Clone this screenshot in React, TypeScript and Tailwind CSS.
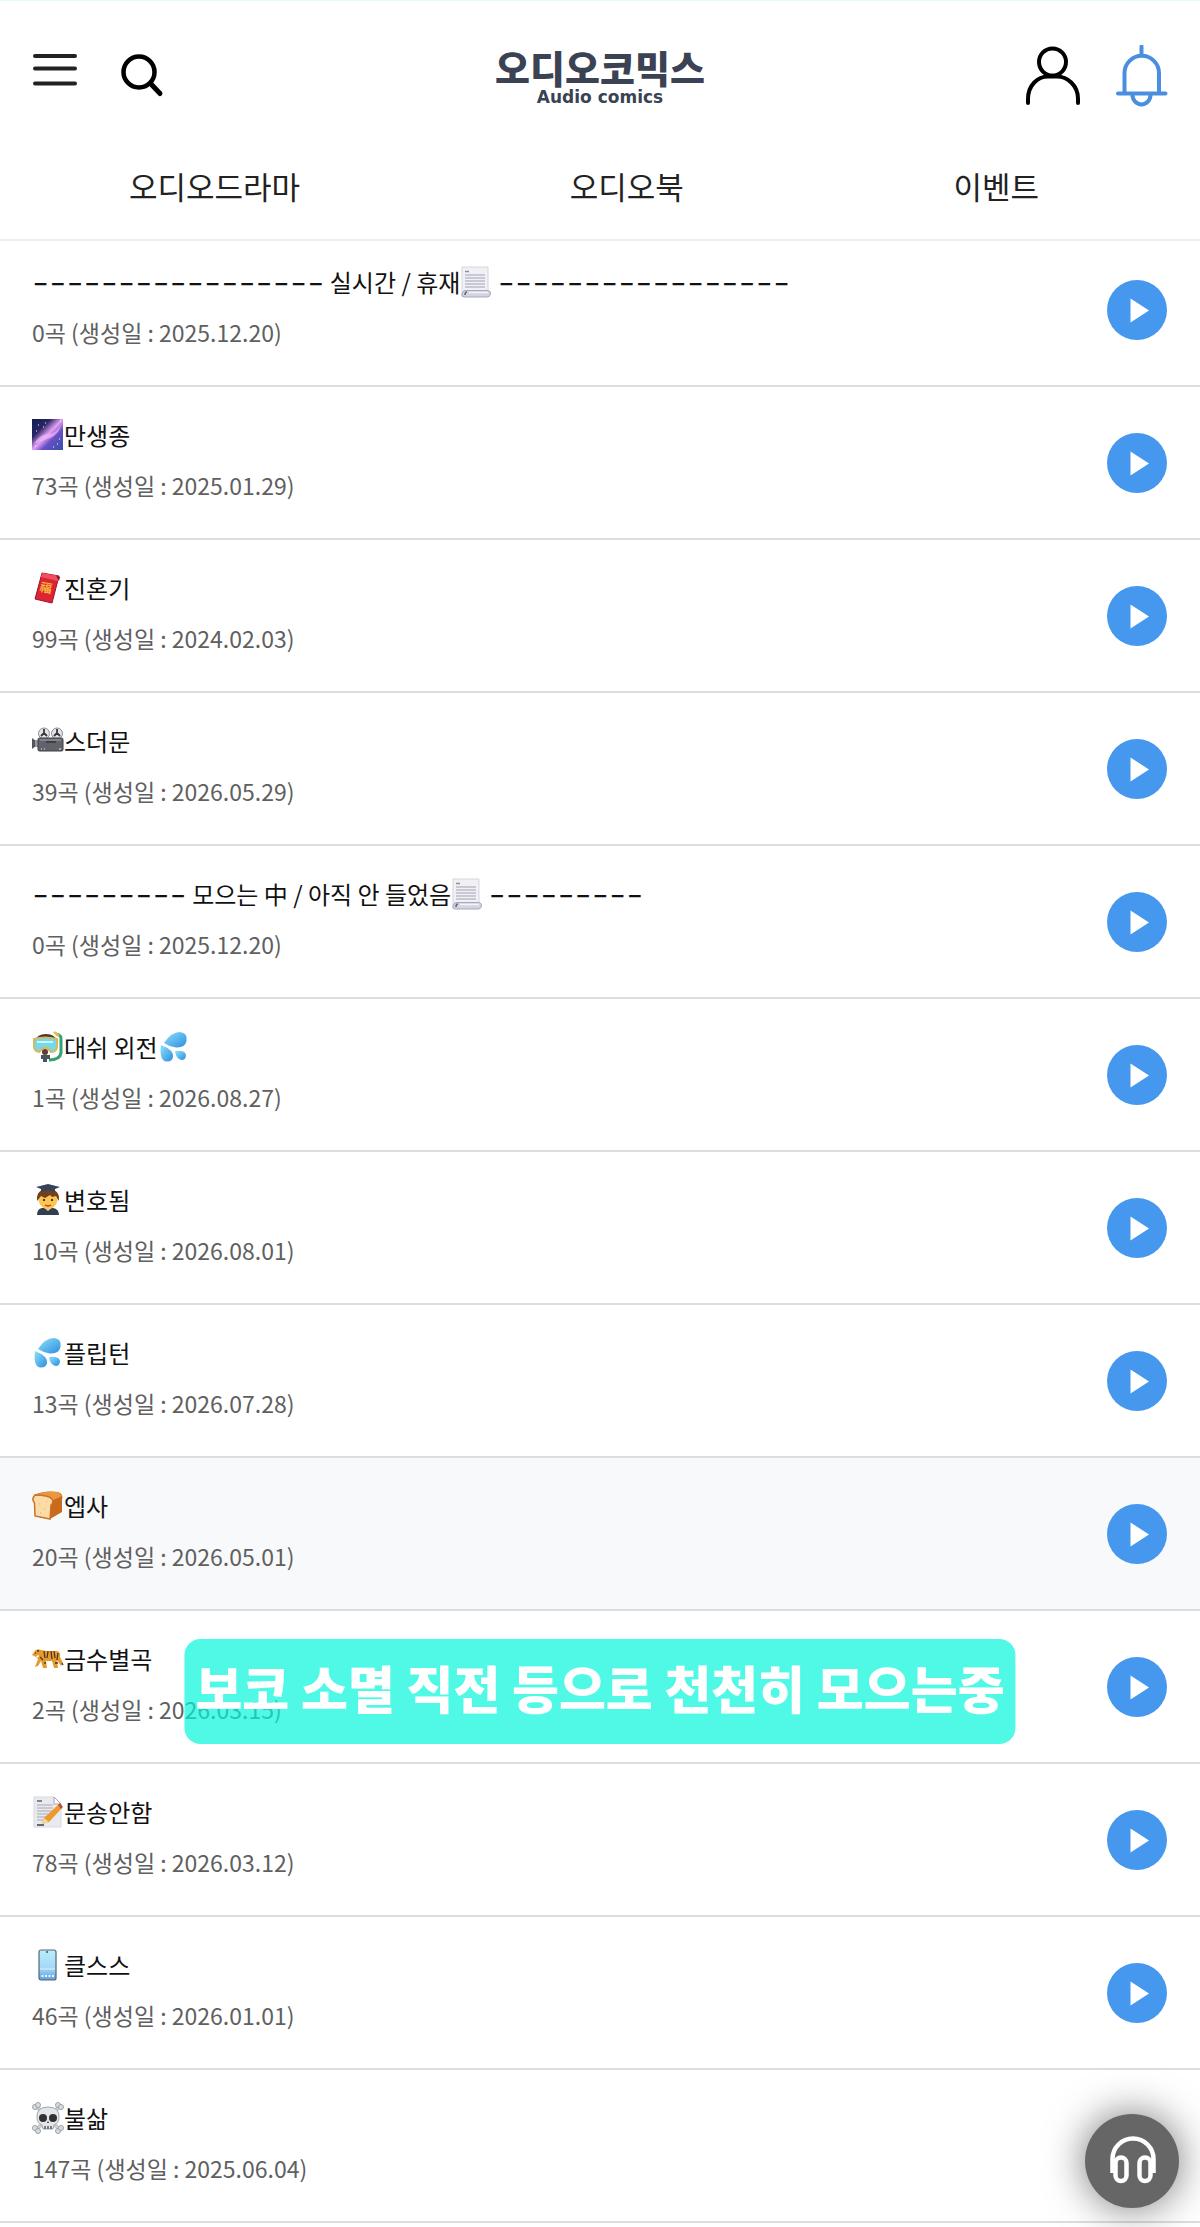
import React from 'react';

type IconName =
  | 'page'
  | 'galaxy'
  | 'envelope'
  | 'camera'
  | 'mask'
  | 'drops'
  | 'student'
  | 'bread'
  | 'tiger'
  | 'memo'
  | 'phone'
  | 'skull';

interface Playlist {
  before?: string;
  icon: IconName;
  after: string;
  trailing?: IconName;
  count: number;
  date: string;
  active?: boolean;
}

const playlists: Playlist[] = [
  { before: '----------------- 실시간 / 휴재', icon: 'page', after: ' -----------------', count: 0, date: '2025.12.20' },
  { icon: 'galaxy', after: '만생종', count: 73, date: '2025.01.29' },
  { icon: 'envelope', after: '진혼기', count: 99, date: '2024.02.03' },
  { icon: 'camera', after: '스더문', count: 39, date: '2026.05.29' },
  { before: '--------- 모으는 中 / 아직 안 들었음', icon: 'page', after: ' ---------', count: 0, date: '2025.12.20' },
  { icon: 'mask', after: '대쉬 외전', trailing: 'drops', count: 1, date: '2026.08.27' },
  { icon: 'student', after: '변호됨', count: 10, date: '2026.08.01' },
  { icon: 'drops', after: '플립턴', count: 13, date: '2026.07.28' },
  { icon: 'bread', after: '엡사', count: 20, date: '2026.05.01', active: true },
  { icon: 'tiger', after: '금수별곡', count: 2, date: '2026.03.15' },
  { icon: 'memo', after: '문송안함', count: 78, date: '2026.03.12' },
  { icon: 'phone', after: '클스스', count: 46, date: '2026.01.01' },
  { icon: 'skull', after: '불삶', count: 147, date: '2025.06.04' },
];

const drawings: Record<IconName, React.ReactNode> = {
  page: (
    <>
      <path d="M2 1H28V26H5V30H2Z" fill="#f1f1f5" stroke="#d5d5de" />
      <path d="M5 5.500H9" stroke="#8f8f9c" strokeWidth="1.500" />
      <path d="M5 9H25M5 12H25M5 15H25M5 18H25M5 21H25" stroke="#bcbccb" strokeWidth="1.400" />
      <path d="M5 24.500H28Q31 25 30.500 28Q30 31 27 31H4Q1.500 31 2 28Q2.500 25 5 24.500Z" fill="#d3d3e2" stroke="#a9a9bc" />
      <path d="M7 26Q5 26 5 29" fill="none" stroke="#66667c" strokeWidth="1.600" />
      <path d="M9 26.500H28" stroke="#f3f3fa" strokeWidth="1.500" />
    </>
  ),
  galaxy: (
    <>
      <defs>
        <linearGradient id="galaxy" x1="0" y1="0" x2="1" y2="1">
          <stop offset="0" stopColor="#0d1c4d" />
          <stop offset="0.3" stopColor="#2b2566" />
          <stop offset="0.5" stopColor="#e3a0f5" />
          <stop offset="0.66" stopColor="#6a4fc4" />
          <stop offset="1" stopColor="#3152a8" />
        </linearGradient>
      </defs>
      <rect x="0" y="0" width="31" height="31" fill="url(#galaxy)" />
      <path d="M2 25Q8 15 16 15T29 6Q26 16 18 19T2 25Z" fill="#f0b8f8" opacity="0.7" />
      <path d="M6 6h1M13 4h1M4 12h1M27 20h1M21 28h1M25 25h1M28 2h1M3 27h1M11 8h1" stroke="#fff" strokeWidth="1.200" />
    </>
  ),
  envelope: (
    <>
      <path d="M10 1L27 4L20 31L3 27Z" fill="#dd2435" stroke="#a3142c" strokeLinejoin="round" />
      <path d="M10 1L27 4L26 9L9 5Z" fill="#f0505a" />
      <path d="M24 3.500L28 5L27 9Z" fill="#6f1524" />
      <text x="8" y="20" fontSize="12" fontWeight="700" fill="#f6b93b" transform="rotate(12 14 16)">福</text>
    </>
  ),
  camera: (
    <>
      <circle cx="12" cy="8.500" r="5.500" fill="#e4e4e7" stroke="#8b8b93" />
      <circle cx="25" cy="8.500" r="5.500" fill="#e4e4e7" stroke="#8b8b93" />
      <path d="M12 4v4M9 11l3-3l3 3M25 4v4M22 11l3-3l3 3" stroke="#35353c" strokeWidth="1.800" fill="none" />
      <path d="M0 13L4 16V21L0 24Z" fill="#55555d" />
      <rect x="3" y="15" width="4" height="7" fill="#9999a1" />
      <rect x="6" y="13" width="25" height="13" rx="1.500" fill="#62626b" stroke="#3e3e47" />
      <path d="M8 15H29" stroke="#a2a2ac" />
      <path d="M14 17H24" stroke="#36363e" strokeWidth="1.500" />
      <path d="M9 24h1M12 24h1M27 24h2" stroke="#eee" />
    </>
  ),
  mask: (
    <>
      <path d="M3 10Q5 3 14 3Q23 3 25 10Z" fill="#4b382b" />
      <path d="M24 3Q30 4 29 9V22Q28 29 17 29" fill="none" stroke="#35a071" strokeWidth="3" />
      <path d="M22 1L27 5" stroke="#e9bb3f" strokeWidth="2.500" />
      <path d="M2 8Q13 5 25 8V15Q25 21 19 21L15 17H11L7 21Q2 20 2 15Z" fill="#78d7e8" stroke="#d8b85c" strokeWidth="2" strokeLinejoin="round" />
      <path d="M5 11H21" stroke="#c9f7fb" strokeWidth="2" />
      <ellipse cx="13" cy="21" rx="3" ry="3" fill="#5a4030" />
      <path d="M9 24H18V28H15V31H11V28H9Z" fill="#4b535b" />
    </>
  ),
  drops: (
    <>
      <defs>
        <linearGradient id="drop" x1="0" y1="0" x2="1" y2="1">
          <stop offset="0" stopColor="#8fe1fa" />
          <stop offset="1" stopColor="#2b8ee0" />
        </linearGradient>
      </defs>
      <path d="M6 12Q13 1 22 1Q30 2 28.500 10Q27 17 18 16.500Q12 16 6 12Z" fill="url(#drop)" />
      <path d="M3 14Q16 19 15 26Q14 31 8 30.500Q1 29 3 14Z" fill="url(#drop)" />
      <path d="M17 20Q27 19 28 24Q28 29 23.500 29Q18 28 17 20Z" fill="url(#drop)" />
    </>
  ),
  student: (
    <>
      <path d="M5 31Q5 25 10 24H21Q27 25 27 31Z" fill="#333c50" />
      <path d="M13 24L16 27L19 24Z" fill="#fafafa" />
      <path d="M6 9Q5 23 16 26Q27 23 26 9Z" fill="#fbc453" />
      <path d="M5 17Q4 5 16 5Q28 5 27 17L24 12L20 13L18 11L13 14L9 12Z" fill="#70401f" />
      <path d="M4 3L16 0L28 3L23 5V8Q16 5 9 8V5Z" fill="#36435a" />
      <path d="M12 15v2M20 15v2" stroke="#3b2410" strokeWidth="1.800" />
      <path d="M13 21Q16 23 19 21" fill="none" stroke="#904b20" strokeWidth="1.300" />
    </>
  ),
  bread: (
    <>
      <path d="M2 5Q12 0 26 2Q32 4 30 10V22L18 29Z" fill="#c96a1d" />
      <path d="M2 5Q14 0 26 2L30 6L19 11Z" fill="#e9983f" />
      <path d="M3 5Q16 5 20 9Q22 13 19 15L18 29L3 26L2.500 13Q-1 9 3 5Z" fill="#fbdca7" stroke="#c97428" strokeWidth="1.500" />
      <path d="M7 14h1M12 19h1M8 23h1M14 12h1" stroke="#e4aa60" />
    </>
  ),
  tiger: (
    <>
      <path d="M2 9Q4 5 9 7L15 8H25Q29 9 28 14L31 20L29 23L25 17L26 25H22L20 18L14 18L15 25H11L9 18L6 23L3 24L6 16L4 14L0 12Z" fill="#e49c31" />
      <path d="M12 8l1 7M16 8l-1 7M19 8l1 8M22 8l1 7M26 10l-1 7M8 14l3 3M12 20h2M23 20h3M5 8h2M30 20l1 2" stroke="#533418" strokeWidth="1.300" />
      <path d="M4 13L7 12L6 15Z" fill="#fff" />
      <path d="M3 10h1" stroke="#222" />
    </>
  ),
  memo: (
    <>
      <path d="M2 1H22L29 8V31H2Z" fill="#e9eaef" stroke="#d8d9df" />
      <path d="M22 1V8H29Z" fill="#fff" stroke="#a6a6ad" />
      <path d="M5 5H10" stroke="#62626b" strokeWidth="1.500" />
      <path d="M5 9H21M5 12H21M5 15H20M5 18H17M5 21H15M5 24H13" stroke="#a7a8b3" />
      <path d="M5 29H12" stroke="#3b3b42" strokeWidth="1.500" />
      <path d="M10 28L12 22L27 8L30 12L17 26Z" fill="#ee992d" />
      <path d="M10 28L12 22L17 26Z" fill="#f4d5a2" />
      <path d="M26 9L28 7L31 11L29 13Z" fill="#b7543d" />
    </>
  ),
  phone: (
    <>
      <defs>
        <linearGradient id="phone" x1="0" y1="0" x2="0" y2="1">
          <stop offset="0" stopColor="#b9edfa" />
          <stop offset="0.6" stopColor="#a5d8f6" />
          <stop offset="1" stopColor="#5f9fde" />
        </linearGradient>
      </defs>
      <rect x="7" y="1" width="17" height="30" rx="2" fill="url(#phone)" stroke="#536779" strokeWidth="1.200" />
      <path d="M15 2v2" stroke="#42515f" strokeWidth="1.500" />
      <path d="M8 20H23" stroke="#d8f5fd" />
      <path d="M9.500 27h2M13 27h2M16.500 27h2M20 27h2" stroke="#e8f8ff" strokeWidth="2" />
    </>
  ),
  skull: (
    <>
      <path d="M4 4L28 28M28 4L4 28" stroke="#c8cdd1" strokeWidth="4" />
      <g fill="#d9dde0" stroke="#9ba2a8">
        <circle cx="3" cy="5" r="2.500" />
        <circle cx="6" cy="3" r="2.500" />
        <circle cx="26" cy="3" r="2.500" />
        <circle cx="29" cy="5" r="2.500" />
        <circle cx="3" cy="26" r="2.500" />
        <circle cx="6" cy="29" r="2.500" />
        <circle cx="26" cy="29" r="2.500" />
        <circle cx="29" cy="26" r="2.500" />
      </g>
      <path d="M5 16Q4 5 16 5Q28 5 27 16Q27 21 22 23L21 27H11L10 23Q5 21 5 16Z" fill="#e3e6e8" stroke="#a1a7ab" />
      <circle cx="11" cy="16" r="4" fill="#2f3336" />
      <circle cx="21" cy="16" r="4" fill="#2f3336" />
      <path d="M15 21L16 19L17 21Z" fill="#222" />
      <path d="M13 24v3M16 24v3M19 24v3" stroke="#44494c" strokeWidth="1.300" />
    </>
  ),
};

function Emoji({ name }: { name: IconName }) {
  return (
    <svg viewBox="0 0 32 32" className="w-8 h-8 shrink-0" aria-hidden="true">
      {drawings[name]}
    </svg>
  );
}

// Runs of hyphens use a wide face so that they read as a divider line
function TitleText({ text }: { text: string }) {
  return (
    <span className="flex items-center h-8 whitespace-pre">
      {text.split(/(-+)/).filter(Boolean).map((part, i) =>
        part.startsWith('-') ? (
          <span key={i} className="font-['Inter',sans-serif] font-light text-[38px] leading-8">
            {part}
          </span>
        ) : (
          <span key={i}>{part}</span>
        )
      )}
    </span>
  );
}

function Header() {
  return (
    <header className="sticky top-0 z-10 bg-white border-t border-t-[#e6fafa] border-b-2 border-b-[#efefef]">
      <div className="grid grid-cols-[1fr_auto_1fr] items-start h-[133px] px-8 pt-11">
        <div className="flex gap-[42px]">
          <button type="button" aria-label="메뉴" className="cursor-pointer">
            <svg viewBox="0 0 46 64" className="w-[46px] h-16" fill="none" stroke="#222" strokeWidth="4" strokeLinecap="round">
              <path d="M3 11H43M3 23.500H43M3 38.500H43" />
            </svg>
          </button>
          <button type="button" aria-label="검색" className="cursor-pointer">
            <svg viewBox="0 0 44 64" className="w-11 h-16" fill="none" stroke="#000" strokeLinecap="round">
              <circle cx="19" cy="27" r="15.500" strokeWidth="4.500" />
              <path d="M31 39L40 48.500" strokeWidth="5" />
            </svg>
          </button>
        </div>

        <a href="#home" className="flex flex-col items-center text-[#3a4254]">
          <span className="text-[38px] leading-[44px] font-black">오디오코믹스</span>
          <span className="font-['DejaVu_Sans',sans-serif] text-[17px] leading-4 font-bold">Audio comics</span>
        </a>

        <div className="flex justify-end gap-8">
          <button type="button" aria-label="내 정보" className="cursor-pointer">
            <svg viewBox="0 0 56 64" className="w-14 h-16" fill="none" stroke="#000" strokeWidth="4" strokeLinecap="round">
              <circle cx="28.500" cy="17" r="13.500" />
              <path d="M4 58V54C4 40 14 31.500 24 31.500H33C43 31.500 54 40 54 54V58" />
            </svg>
          </button>
          <button type="button" aria-label="알림" className="cursor-pointer">
            <svg viewBox="0 0 56 64" className="w-14 h-16" fill="none" stroke="#4a8fdf" strokeWidth="4" strokeLinecap="round">
              <path d="M29.500 1.500V10M12.500 47V28A17.200 17.200 0 0 1 47 28V47M6 48.500H53.500" />
              <path d="M20.500 50A9 9.500 0 0 0 38.500 50" />
            </svg>
          </button>
        </div>
      </div>

      <nav className="flex items-center justify-between h-[105px] pl-[129px] pr-[161px] text-[31px] text-[#222]">
        <a href="#drama">오디오드라마</a>
        <a href="#book">오디오북</a>
        <a href="#event">이벤트</a>
      </nav>
    </header>
  );
}

function PlaylistRow({ item }: { item: Playlist }) {
  return (
    <li
      className={`flex items-center justify-between pl-8 pr-[33px] border-b-2 border-[#dcdddf] ${
        item.active ? 'bg-[#f8f9fb]' : 'bg-white'
      }`}
    >
      <div className="pt-8 pb-[37px]">
        <h2 className="flex items-center h-8 text-2xl leading-8 text-[#111]">
          {item.before && <TitleText text={item.before} />}
          <Emoji name={item.icon} />
          <TitleText text={item.after} />
          {item.trailing && <Emoji name={item.trailing} />}
        </h2>
        <p className="mt-[18px] text-[23px] leading-8 text-[#606060]">
          {item.count}곡 (생성일 : {item.date})
        </p>
      </div>
      <button type="button" aria-label="재생" className="w-[60px] h-[60px] rounded-full bg-[#4598ee] cursor-pointer">
        <svg viewBox="0 0 60 60" className="w-full h-full" fill="#fff">
          <path d="M23.500 18.500L42 30.500L23.500 42.500Z" />
        </svg>
      </button>
    </li>
  );
}

export default function App() {
  return (
    <div className="min-h-screen bg-white font-normal font-['Noto_Sans_CJK_KR',sans-serif]">
      <Header />

      <main>
        <ul className="-mt-[7px]">
          {playlists.map((item, i) => (
            <PlaylistRow key={i} item={item} />
          ))}
        </ul>
      </main>

      {/* Toast */}
      <div
        role="status"
        className="fixed bottom-[483px] left-1/2 -translate-x-1/2 z-20 flex items-center h-[105px] px-[11px] pb-2 rounded-2xl bg-[rgba(0,246,219,0.69)] text-white text-[51px] leading-none font-black whitespace-nowrap"
      >
        보코 소멸 직전 등으로 천천히 모으는중
      </div>

      {/* Floating player button */}
      <button
        type="button"
        aria-label="플레이어 열기"
        className="fixed right-[21px] bottom-[19px] z-20 w-[94px] h-[94px] rounded-full bg-[#666] shadow-[0_0_40px_rgba(0,0,0,0.55)] cursor-pointer"
      >
        <svg viewBox="0 0 94 94" className="w-full h-full" fill="none" stroke="#fff" strokeWidth="4.500">
          <path d="M27.500 59V45A20.500 20.500 0 0 1 68.500 45V59" />
          <rect x="30.500" y="43.500" width="11" height="23.500" rx="5.500" />
          <rect x="54.500" y="43.500" width="11" height="23.500" rx="5.500" />
        </svg>
      </button>
    </div>
  );
}
